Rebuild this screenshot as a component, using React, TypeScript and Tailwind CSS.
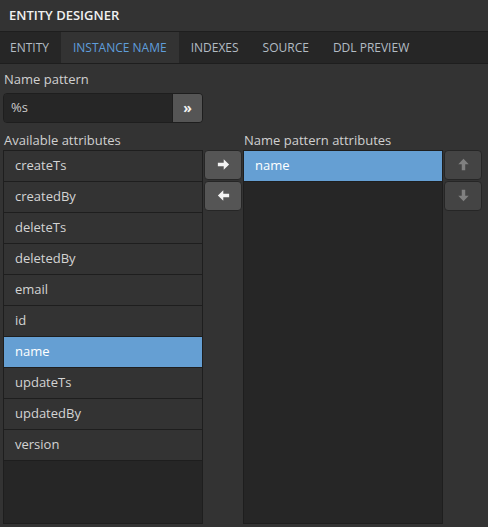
import React from 'react'

const available = [
  'createTs',
  'createdBy',
  'deleteTs',
  'deletedBy',
  'email',
  'id',
  'name',
  'updateTs',
  'updatedBy',
  'version',
]

const tabs = ['ENTITY', 'INSTANCE NAME', 'INDEXES', 'SOURCE', 'DDL PREVIEW']

function Arrow({ dir, color }: { dir: 'right' | 'left' | 'up' | 'down'; color: string }) {
  const rot = { right: 0, down: 90, left: 180, up: 270 }[dir]
  return (
    <svg width="13" height="13" viewBox="0 0 12 12" style={{ transform: `rotate(${rot}deg)` }}>
      <path d="M0.8 4.4h5.4V1.2L11.2 6l-5 4.8V7.6H0.8z" fill={color} />
    </svg>
  )
}

function SideButton({ dir, light }: { dir: 'right' | 'left' | 'up' | 'down'; light?: boolean }) {
  return (
    <button
      className={
        'flex h-[30px] w-[38px] items-center justify-center rounded-[4px] border border-[#262626] ' +
        (light ? 'bg-[#555555]' : 'bg-[#444444]')
      }
    >
      <Arrow dir={dir} color={light ? '#f2f2f2' : '#808080'} />
    </button>
  )
}

export default function App() {
  return (
    <div
      className="flex h-[527px] w-[488px] flex-col bg-[#333333] text-[13px] text-[#d6d6d6]"
      style={{ fontFamily: '"Open Sans", "Noto Sans", sans-serif' }}
    >
      <div className="flex h-[31px] items-center px-[9px] font-semibold text-[#f0f0f0]">ENTITY DESIGNER</div>

      <div className="flex h-[33px] border-y border-[#1e1e1e] bg-[#262626] text-[12px]">
        {tabs.map((t, i) => (
          <div
            key={t}
            className={
              'flex items-center ' +
              (i === 0 ? 'pl-[10px] pr-[12px] ' : 'px-[12px] ') +
              (i === 1 ? 'bg-[#333333] text-[#5f9edb]' : 'text-[#b3bcc4]')
            }
          >
            {t}
          </div>
        ))}
      </div>

      <div className="px-[3px]">
        <div className="mt-[6px] mb-[3px] pl-[1px] text-[#d0d0d0]">Name pattern</div>
        <div className="flex h-[30px] w-[200px] overflow-hidden rounded-[4px] border border-[#1e1e1e]">
          <div className="flex flex-1 items-center bg-[#262626] px-[7px] text-[#cccccc]">%s</div>
          <div className="flex w-[30px] items-center justify-center border-l border-[#1e1e1e] bg-[#555555] text-[14px] font-bold leading-none text-[#f2f2f2]">
            »
          </div>
        </div>

        <div className="mt-[9px] flex">
          <div className="flex w-[200px] flex-col">
            <div className="mb-[1px] h-[17px] pl-[1px] leading-[17px] text-[#d0d0d0]">Available attributes</div>
            <div className="h-[374px] border border-[#1e1e1e] bg-[#262626]">
              {available.map((a) => (
                <div
                  key={a}
                  className={
                    'flex h-[31px] items-center border-b border-[#1e1e1e] pl-[11px] ' +
                    (a === 'name' ? 'bg-[#659fd3] text-white' : 'bg-[#333333] text-[#d4d4d4]')
                  }
                >
                  {a}
                </div>
              ))}
            </div>
          </div>

          <div className="mt-[18px] ml-[1px] flex flex-col gap-[1px]">
            <SideButton dir="right" light />
            <SideButton dir="left" light />
          </div>

          <div className="ml-[1px] flex w-[200px] flex-col">
            <div className="mb-[1px] h-[17px] pl-[1px] leading-[17px] text-[#d0d0d0]">Name pattern attributes</div>
            <div className="h-[374px] border border-[#1e1e1e] bg-[#262626]">
              <div className="flex h-[31px] items-center border-b border-[#1e1e1e] bg-[#659fd3] pl-[11px] text-white">
                name
              </div>
            </div>
          </div>

          <div className="mt-[18px] ml-[1px] flex flex-col gap-[1px]">
            <SideButton dir="up" />
            <SideButton dir="down" />
          </div>
        </div>
      </div>
    </div>
  )
}
